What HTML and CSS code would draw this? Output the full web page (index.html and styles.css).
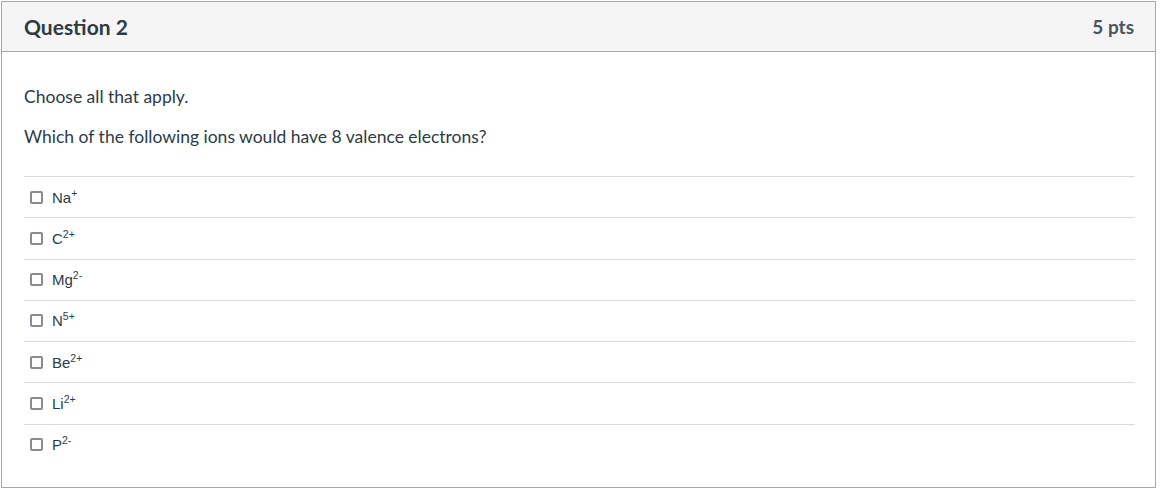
FILE: index.html
```html
<!DOCTYPE html>
<html lang="en">
<head>
<meta charset="utf-8">
<title>Question 2</title>
<link rel="stylesheet" href="styles.css">
</head>
<body>
<div class="question">
  <div class="question-header">
    <h2 class="question-title">Question 2</h2>
    <span class="question-points">5 pts</span>
  </div>
  <div class="question-body">
    <p class="question-text">Choose all that apply.</p>
    <p class="question-text">Which of the following ions would have 8 valence electrons?</p>
    <div class="answers">
      <label class="answer"><span class="checkbox"></span><span class="answer-label">Na<sup>+</sup></span></label>
      <label class="answer"><span class="checkbox"></span><span class="answer-label">C<sup>2+</sup></span></label>
      <label class="answer"><span class="checkbox"></span><span class="answer-label">Mg<sup>2-</sup></span></label>
      <label class="answer"><span class="checkbox"></span><span class="answer-label">N<sup>5+</sup></span></label>
      <label class="answer"><span class="checkbox"></span><span class="answer-label">Be<sup>2+</sup></span></label>
      <label class="answer"><span class="checkbox"></span><span class="answer-label">Li<sup>2+</sup></span></label>
      <label class="answer"><span class="checkbox"></span><span class="answer-label">P<sup>2-</sup></span></label>
    </div>
  </div>
</div>
</body>
</html>
```
FILE: styles.css
```css
* { box-sizing: border-box; }

body {
  margin: 0;
  padding: 1px 0 0 1px;
  font-family: Lato, "Open Sans", sans-serif;
  color: #2d3b45;
  background: #ffffff;
}

.question {
  width: 1155px;
  height: 487px;
  border: 1px solid #a8a8a8;
  background: #ffffff;
}

.question-header {
  height: 50px;
  background: #f5f5f5;
  border-bottom: 1px solid #a8a8a8;
  display: flex;
  align-items: center;
  justify-content: space-between;
  padding: 0 21px 0 22px;
}

.question-title {
  margin: 0;
  font-size: 21px;
  font-weight: 700;
  line-height: 24px;
}

.question-points {
  font-size: 19px;
  font-weight: 700;
  color: #4a555d;
}

.question-body {
  padding: 17px 20px 0 22px;
}

.question-text {
  margin: 16px 0;
  font-size: 17.5px;
  line-height: 24px;
}

.answers {
  margin-top: 27px;
}

.answer {
  display: flex;
  align-items: center;
  height: 41.25px;
  border-top: 1px solid #dcdcdc;
  padding-left: 6px;
  font-family: "Liberation Sans", Arial, sans-serif;
  font-size: 15px;
}

.checkbox {
  width: 13px;
  height: 13px;
  border: 2px solid #8b8a94;
  border-radius: 2px;
  margin-right: 9px;
  flex: none;
}

.answer-label sup {
  font-size: 10.5px;
  line-height: 0;
}
```
